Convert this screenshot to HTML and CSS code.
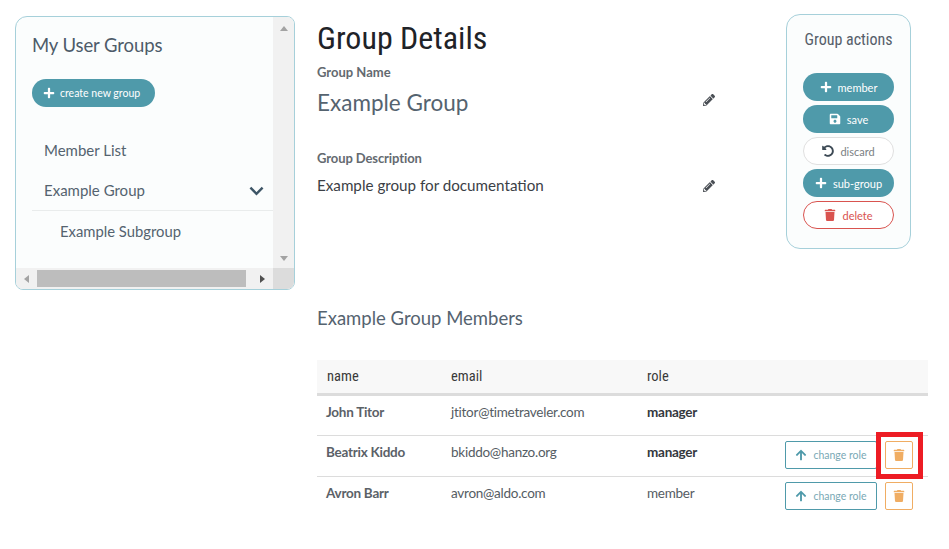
FILE: index.html
```html
<!DOCTYPE html>
<html lang="en">
<head>
<meta charset="utf-8">
<title>Group Details</title>
<link rel="stylesheet" href="styles.css">
</head>
<body>
<svg class="defs" width="0" height="0" aria-hidden="true">
  <symbol id="i-plus" viewBox="0 0 448 512"><path d="M416 208H272V64c0-17.67-14.33-32-32-32h-32c-17.67 0-32 14.33-32 32v144H32c-17.67 0-32 14.33-32 32v32c0 17.67 14.33 32 32 32h144v144c0 17.67 14.33 32 32 32h32c17.67 0 32-14.33 32-32V304h144c17.67 0 32-14.33 32-32v-32c0-17.67-14.33-32-32-32z"/></symbol>
  <symbol id="i-save" viewBox="0 0 448 512"><path d="M433.941 129.941l-83.882-83.882A48 48 0 0 0 316.118 32H48C21.49 32 0 53.49 0 80v352c0 26.51 21.49 48 48 48h352c26.51 0 48-21.49 48-48V163.882a48 48 0 0 0-14.059-33.941zM224 416c-35.346 0-64-28.654-64-64 0-35.346 28.654-64 64-64s64 28.654 64 64c0 35.346-28.654 64-64 64zm96-304.52V212c0 6.627-5.373 12-12 12H76c-6.627 0-12-5.373-12-12V108c0-6.627 5.373-12 12-12h228.52c3.183 0 6.235 1.264 8.485 3.515l3.48 3.48A11.996 11.996 0 0 1 320 111.48z"/></symbol>
  <symbol id="i-undo" viewBox="0 0 512 512"><path d="M255.545 8c-66.269.119-126.438 26.233-170.86 68.685L48.971 40.971C33.851 25.851 8 36.559 8 57.941V192c0 13.255 10.745 24 24 24h134.059c21.382 0 32.09-25.851 16.971-40.971l-41.75-41.75c30.864-28.899 70.801-44.907 113.23-45.273 92.398-.798 170.283 73.977 169.484 169.442C423.236 348.009 349.816 424 256 424c-41.127 0-79.997-14.678-110.63-41.556-4.743-4.161-11.906-3.908-16.368.553L89.34 422.659c-4.872 4.872-4.631 12.815.482 17.433C133.798 479.813 192.074 504 256 504c136.966 0 247.999-111.033 248-247.998C504.001 119.193 392.354 7.755 255.545 8z"/></symbol>
  <symbol id="i-trash" viewBox="0 0 448 512"><path d="M432 32H312l-9.4-18.7A24 24 0 0 0 281.1 0H166.8a23.72 23.72 0 0 0-21.4 13.3L136 32H16A16 16 0 0 0 0 48v32a16 16 0 0 0 16 16h416a16 16 0 0 0 16-16V48a16 16 0 0 0-16-16zM53.2 467a48 48 0 0 0 47.9 45h245.8a48 48 0 0 0 47.9-45L416 128H32z"/></symbol>
  <symbol id="i-pencil" viewBox="0 0 512 512"><path d="M497.9 142.1l-46.1 46.1c-4.7 4.7-12.3 4.7-17 0l-111-111c-4.7-4.7-4.7-12.3 0-17l46.1-46.1c18.7-18.7 49.1-18.7 67.9 0l60.1 60.1c18.8 18.7 18.8 49.1 0 67.9zM284.2 99.8L21.6 362.4.4 483.9c-2.9 16.4 11.4 30.6 27.8 27.8l121.5-21.3 262.6-262.6c4.7-4.7 4.7-12.3 0-17l-111-111c-4.8-4.7-12.4-4.7-17.1 0zM124.1 339.9c-5.5-5.5-5.5-14.3 0-19.8l154-154c5.5-5.5 14.3-5.5 19.8 0s5.5 14.3 0 19.8l-154 154c-5.5 5.5-14.3 5.5-19.8 0zM88 424h48v36.3l-64.5 11.3-31.1-31.1L51.7 376H88v48z"/></symbol>
  <symbol id="i-up" viewBox="0 0 448 512"><path d="M34.9 289.5l-22.2-22.2c-9.4-9.4-9.4-24.6 0-33.9L207 39c9.4-9.4 24.6-9.4 33.9 0l194.3 194.3c9.4 9.4 9.4 24.6 0 33.9L413 289.4c-9.5 9.5-25 9.3-34.3-.4L264 168.6V456c0 13.3-10.7 24-24 24h-32c-13.3 0-24-10.7-24-24V168.6L69.2 289.1c-9.3 9.8-24.8 10-34.3.4z"/></symbol>
</svg>

<div class="page">
  <aside class="sidebar">
    <div class="sidebar-body">
      <div class="sidebar-content">
        <h2 class="sidebar-title">My User Groups</h2>
        <button class="btn btn-teal btn-create"><svg class="ico ico-plus"><use href="#i-plus"/></svg>create new group</button>
        <ul class="tree">
          <li class="tree-item">Member List</li>
          <li class="tree-item tree-open">Example Group
            <svg class="chevron" viewBox="0 0 16 10"><path d="M1.5 1.5 8 8l6.5-6.5"/></svg>
          </li>
          <li class="tree-item tree-sub">Example Subgroup</li>
        </ul>
      </div>
      <div class="vscroll">
        <span class="arrow arrow-up"></span>
        <span class="arrow arrow-down"></span>
      </div>
    </div>
    <div class="hscroll">
      <span class="arrow arrow-left"></span>
      <div class="hthumb"></div>
      <span class="arrow arrow-right"></span>
      <div class="corner"></div>
    </div>
  </aside>

  <main class="main">
    <div class="top">
      <section class="details">
        <h1 class="page-title">Group Details</h1>
        <div class="field-label">Group Name</div>
        <div class="field-row field-name">
          <span>Example Group</span>
          <svg class="ico ico-pencil ico-pencil-up"><use href="#i-pencil"/></svg>
        </div>
        <div class="field-label field-label-desc">Group Description</div>
        <div class="field-row field-desc">
          <span>Example group for documentation</span>
          <svg class="ico ico-pencil"><use href="#i-pencil"/></svg>
        </div>
      </section>
      <section class="actions">
        <h3 class="actions-title">Group actions</h3>
        <div class="actions-list">
          <button class="btn btn-teal"><svg class="ico"><use href="#i-plus"/></svg>member</button>
          <button class="btn btn-teal"><svg class="ico"><use href="#i-save"/></svg>save</button>
          <button class="btn btn-plain"><svg class="ico ico-dark"><use href="#i-undo"/></svg>discard</button>
          <button class="btn btn-teal"><svg class="ico"><use href="#i-plus"/></svg>sub-group</button>
          <button class="btn btn-red"><svg class="ico ico-red"><use href="#i-trash"/></svg>delete</button>
        </div>
      </section>
    </div>

    <h2 class="members-title">Example Group Members</h2>
    <table class="members">
      <thead>
        <tr><th class="col-name">name</th><th class="col-email">email</th><th class="col-role">role</th><th></th></tr>
      </thead>
      <tbody>
        <tr><td class="cell-name">John Titor</td><td>jtitor@timetraveler.com</td><td class="cell-strong">manager</td><td></td></tr>
        <tr><td class="cell-name">Beatrix Kiddo</td><td>bkiddo@hanzo.org</td><td class="cell-strong">manager</td>
          <td class="cell-btns"><div class="row-btns"><button class="rbtn rbtn-role"><svg class="ico ico-teal"><use href="#i-up"/></svg>change role</button><span class="highlight"><button class="rbtn rbtn-del"><svg class="ico ico-orange"><use href="#i-trash"/></svg></button></span></div></td></tr>
        <tr><td class="cell-name">Avron Barr</td><td>avron@aldo.com</td><td>member</td>
          <td class="cell-btns"><div class="row-btns"><button class="rbtn rbtn-role"><svg class="ico ico-teal"><use href="#i-up"/></svg>change role</button><button class="rbtn rbtn-del"><svg class="ico ico-orange"><use href="#i-trash"/></svg></button></div></td></tr>
      </tbody>
    </table>
  </main>
</div>
</body>
</html>
```
FILE: styles.css
```css
*, *::after { box-sizing: border-box; }
html, body { margin: 0; padding: 0; background: #fff; }
body { font-family: "Lato", "Liberation Sans", sans-serif; color: #4a4f55; overflow: hidden; height: 549px; }
.defs { position: absolute; }
.page { display: flex; align-items: flex-start; padding: 14px 0 0 15px; }
h1, h2, h3, ul { margin: 0; padding: 0; font-weight: 400; }
ul { list-style: none; }
button { font-family: inherit; padding: 0; cursor: pointer; }

.ico { display: block; width: 12px; height: 12px; fill: #fff; flex: none; }
.ico-dark { fill: #3d4a55; }
.ico-red { fill: #d9534f; }
.ico-teal { fill: #4f9aaa; }
.ico-orange { fill: #f0ad63; }
.ico-pencil { fill: #4a4f55; width: 12px; height: 12px; margin-top: 1px; }
.ico-pencil-up { margin-top: 0; margin-bottom: 6px; }

/* sidebar */
.sidebar { width: 280px; height: 274px; margin-top: 2px; border: 1px solid #a6d0da; border-radius: 12px 8px 8px 8px; background: #fbfdfd; overflow: hidden; display: flex; flex-direction: column; }
.sidebar-body { flex: 1; display: flex; min-height: 0; }
.sidebar-content { flex: 1; padding: 16px 0 0 16px; }
.sidebar-title { font-size: 18.5px; line-height: 24px; color: #4d5b69; letter-spacing: -0.1px; }
.btn { height: 28px; border-radius: 14px; border: 1px solid transparent; display: flex; align-items: center; justify-content: center; gap: 6px; font-size: 11px; width: 91px; }
.btn-teal { background: #4f9aaa; color: #fff; }
.btn-plain { background: #fff; border-color: #e0e0e0; color: #7b7f83; }
.btn-red { background: #fff; border-color: #d9534f; color: #d9534f; }
.btn-create { width: 123px; margin-top: 22px; justify-content: flex-start; padding-left: 10px; gap: 5px; font-size: 10.5px; }
.tree { margin-top: 23px; }
.tree-item { position: relative; height: 40px; line-height: 40px; padding-left: 12px; font-size: 15px; color: #54636f; }
.tree-open { border-bottom: 1px solid #e9ecec; height: 41px; }
.tree-sub { padding-left: 28px; font-size: 14.8px; }
.chevron { position: absolute; right: 9px; top: 16px; width: 15px; height: 10px; fill: none; stroke: #3d5566; stroke-width: 2.6; }

.vscroll { width: 21px; background: #f1f1f1; display: flex; flex-direction: column; justify-content: space-between; align-items: center; padding: 9px 0 7px; }
.hscroll { height: 21px; background: #f1f1f1; display: flex; align-items: center; position: relative; }
.hthumb { width: 209px; height: 17px; background: #bdbdbd; margin: 0 14px 0 0; }
.corner { width: 21px; height: 21px; background: #dcdcdc; margin-left: auto; }
.arrow { display: block; width: 0; height: 0; border-style: solid; flex: none; }
.arrow-up { border-width: 0 4.5px 5px; border-color: transparent transparent #a3a3a3; }
.arrow-down { border-width: 5px 4.5px 0; border-color: #a3a3a3 transparent transparent; }
.arrow-left { border-width: 4.5px 5px 4.5px 0; border-color: transparent #a3a3a3 transparent transparent; margin: 0 8px 0 8px; }
.arrow-right { border-width: 4.5px 0 4.5px 5px; border-color: transparent transparent transparent #505050; }

/* main */
.main { width: 611px; margin-left: 22px; }
.top { display: flex; justify-content: space-between; height: 283px; padding-right: 17px; }
.details { width: 398px; }
.page-title { font-family: "Roboto", sans-serif; font-stretch: 75%; font-size: 32px; line-height: 40px; color: #1f2328; padding-top: 4px; height: 49px; }
.field-label { font-size: 13px; font-weight: 700; line-height: 18px; color: #646a70; }
.field-row { display: flex; justify-content: space-between; align-items: center; }
.field-name { font-size: 22.5px; line-height: 32px; color: #55636f; margin-top: 6px; }
.field-label-desc { margin-top: 30px; letter-spacing: -0.1px; }
.field-desc { font-size: 15.2px; line-height: 22px; color: #3b4046; margin-top: 7px; }

.actions { width: 125px; height: 235px; border: 1px solid #a6d0da; border-radius: 14px; background: #fbfdfd; padding: 16px 16px 0; }
.actions-title { font-family: "Roboto", sans-serif; font-stretch: 75%; font-size: 16px; line-height: 18px; text-align: center; color: #56606a; white-space: nowrap; }
.actions-list { margin-top: 24px; display: flex; flex-direction: column; gap: 4px; }

.members-title { font-size: 18.5px; line-height: 24px; color: #55636f; margin-top: 9px; }

.members { width: 611px; border-collapse: collapse; table-layout: fixed; margin-top: 30px; font-size: 13.5px; letter-spacing: -0.26px; }
.members th { background: #f8f8f8; height: 34px; border-bottom: 3px solid #dcdcdc; text-align: left; padding: 0 0 0 10px; font-family: "Roboto", sans-serif; font-stretch: 75%; font-weight: 400; font-size: 14.5px; letter-spacing: 0; color: #3a3a3a; }
.col-name { width: 124px; }
.col-email { width: 196px; }
.col-role { width: 140px; }
.members td { height: 41px; border-bottom: 1px solid #dcdcdc; padding: 4px 0 0 10px; vertical-align: top; line-height: 24px; color: #555c63; white-space: nowrap; }
.members tr:last-child td { border-bottom: 0; }
.cell-name { font-weight: 700; color: #5b6167 !important; padding-left: 9px !important; }
.cell-strong { font-weight: 700; color: #33383d !important; }
.members .cell-btns { padding: 5px 0 0; }
.row-btns { display: flex; gap: 8px; align-items: center; justify-content: flex-end; padding-right: 15px; }
.rbtn { height: 28px; background: #fff; border-radius: 2px; display: flex; align-items: center; justify-content: center; }
.rbtn-role { width: 92px; border: 1px solid #4f9aaa; color: #7aa9b5; font-size: 10.5px; letter-spacing: 0; gap: 6px; }
.rbtn-del { width: 28px; border: 1px solid #f0ad63; }
.highlight { position: relative; display: block; }
.highlight::after { content: ""; position: absolute; left: -9px; top: -9px; width: 47px; height: 47px; border: 5px solid #ed1c24; pointer-events: none; }
```
